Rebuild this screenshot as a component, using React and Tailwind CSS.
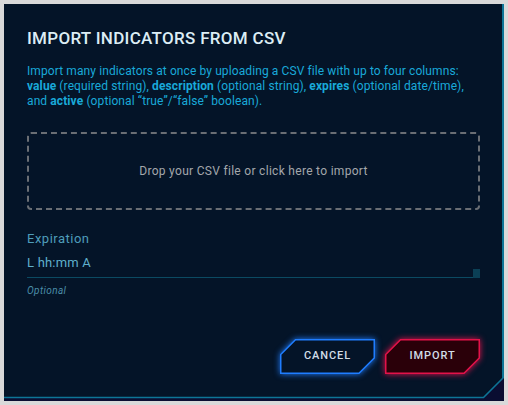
function CutButton({ label, variant }) {
  const isImport = variant === "import";
  return (
    <button
      type="button"
      className="relative flex h-[35px] w-[95px] items-center justify-center text-[11px] font-medium tracking-[0.9px] text-[#d2dde7]"
    >
      <svg
        className={
          "absolute inset-0 " +
          (isImport
            ? "drop-shadow-[0_0_3px_#e3124a]"
            : "drop-shadow-[0_0_3px_#1f7dff]")
        }
        width="95"
        height="35"
        viewBox="0 0 95 35"
      >
        <path
          d="M15.5 0.75 H94.25 V19 L79 34.25 H0.75 V15.5 Z"
          fill={isImport ? "#2a0009" : "#041428"}
          stroke={isImport ? "#e3124a" : "#1f7dff"}
          strokeWidth="1.5"
        />
      </svg>
      <span className="relative">{label}</span>
    </button>
  );
}

export default function App() {
  return (
    <div className="h-[405px] w-[508px] bg-[#d9d9d9] p-1 font-['Roboto',sans-serif]">
      <div className="relative flex h-[397px] w-[500px] flex-col bg-[#041428] pl-[23px] pr-[24px] pt-[24px] pb-[27px]">
        <svg
          className="pointer-events-none absolute inset-0"
          width="500"
          height="397"
          viewBox="0 0 500 397"
        >
          <polygon
            points="479.5,393.5 499,374 500,374 500,397 0,397 0,393.5"
            fill="#0a0d31"
          />
          <polyline
            points="499,0 499,374 479.5,393.5 0,393.5"
            fill="none"
            stroke="#0d7597"
            strokeWidth="1.6"
          />
          <line x1="499" y1="0" x2="499" y2="374" stroke="#0d7597" strokeWidth="2" />
        </svg>

        <h2 className="text-[17px] font-medium leading-[20px] tracking-[0.3px] text-[#dcedf5]">
          IMPORT INDICATORS FROM CSV
        </h2>

        <p className="mt-[16px] text-[12px] leading-[15px] tracking-[0.1px] text-[#19a9d9]">
          Import many indicators at once by uploading a CSV file with up to four columns:{" "}
          <b className="font-bold">value</b> (required string),{" "}
          <b className="font-bold">description</b> (optional string),{" "}
          <b className="font-bold">expires</b> (optional date/time), and{" "}
          <b className="font-bold">active</b> (optional “true”/“false” boolean).
        </p>

        <div className="mt-[23px] flex h-[78px] items-center justify-center rounded-[4px] border-2 border-dashed border-[#6a6e74] text-[12px] tracking-[0.3px] text-[#a3a7ab]">
          Drop your CSV file or click here to import
        </div>

        <label className="mt-[21px] text-[13px] leading-[16px] tracking-[0.5px] text-[#4e9dba]">
          Expiration
        </label>
        <div className="mt-[8px] flex items-end">
          <div className="flex-1 border-b border-[#0b4a62] pb-[6px] text-[13px] leading-[16px] tracking-[0.2px] text-[#5fb0cc]">
            L hh:mm A
          </div>
          <div className="h-[9px] w-[7px] bg-[#0b3f55]" />
        </div>
        <div className="mt-[6px] text-[10px] italic leading-[13px] tracking-[0.4px] text-[#4b8ea8]">
          Optional
        </div>

        <div className="mt-auto flex justify-end gap-[10px]">
          <CutButton label="CANCEL" variant="cancel" />
          <CutButton label="IMPORT" variant="import" />
        </div>
      </div>
    </div>
  );
}
